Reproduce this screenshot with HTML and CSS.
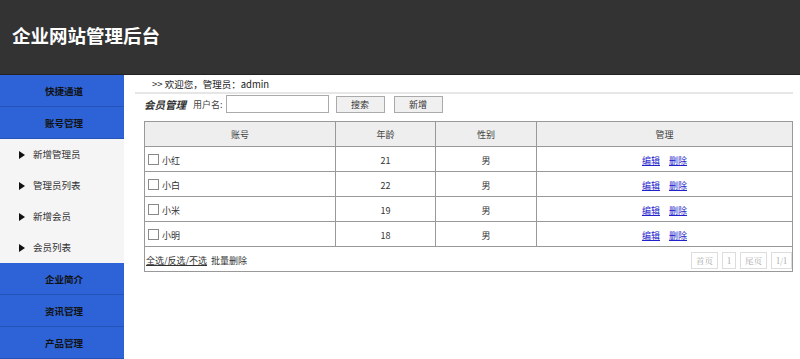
FILE: index.html
```html
<!DOCTYPE html>
<html lang="zh-CN">
  <head>
    <meta charset="UTF-8" />
    <title>企业网站管理后台</title>
    <link rel="stylesheet" href="styles.css">
  </head>
  <body>
    <!-- 顶部 -->
    <header class="top">
      <h1>企业网站管理后台</h1>
    </header>

    <div class="wrap">
      <!-- 左侧菜单 -->
      <aside class="side">
        <div class="menu-title">快捷通道</div>
        <div class="menu-title">账号管理</div>
        <ul class="sub-menu">
          <li>新增管理员</li>
          <li>管理员列表</li>
          <li>新增会员</li>
          <li>会员列表</li>
        </ul>
        <div class="menu-title">企业简介</div>
        <div class="menu-title">资讯管理</div>
        <div class="menu-title">产品管理</div>
      </aside>

      <!-- 内容区 -->
      <main class="main">
        <div class="welcome">&gt;&gt; 欢迎您，管理员：admin</div>

        <div class="toolbar">
          <span class="page-name">会员管理</span>
          <label>用户名:</label>
          <input type="text" class="search-input" />
          <button class="btn">搜索</button>
          <button class="btn">新增</button>
        </div>

        <table class="list">
          <thead>
            <tr>
              <th class="c-name">账号</th>
              <th class="c-age">年龄</th>
              <th class="c-sex">性别</th>
              <th>管理</th>
            </tr>
          </thead>
          <tbody>
            <tr>
              <td class="left"><span class="chk"></span>小红</td>
              <td>21</td>
              <td>男</td>
              <td><a href="#">编辑</a><a href="#">删除</a></td>
            </tr>
            <tr>
              <td class="left"><span class="chk"></span>小白</td>
              <td>22</td>
              <td>男</td>
              <td><a href="#">编辑</a><a href="#">删除</a></td>
            </tr>
            <tr>
              <td class="left"><span class="chk"></span>小米</td>
              <td>19</td>
              <td>男</td>
              <td><a href="#">编辑</a><a href="#">删除</a></td>
            </tr>
            <tr>
              <td class="left"><span class="chk"></span>小明</td>
              <td>18</td>
              <td>男</td>
              <td><a href="#">编辑</a><a href="#">删除</a></td>
            </tr>
          </tbody>
          <tfoot>
            <tr>
              <td colspan="4">
                <div class="foot">
                  <span class="batch"><u>全选/反选/不选</u>&nbsp;&nbsp;批量删除</span>
                  <span class="pager">
                    <span class="pg">首页</span>
                    <span class="pg">1</span>
                    <span class="pg">尾页</span>
                    <span class="pg">1/1</span>
                  </span>
                </div>
              </td>
            </tr>
          </tfoot>
        </table>
      </main>
    </div>
  </body>
</html>
```

FILE: styles.css
```css
* {
  margin: 0;
  padding: 0;
  box-sizing: border-box;
}

body {
  font-family: "Noto Sans CJK SC", "Liberation Sans", sans-serif;
  font-size: 9px;
  color: #333;
  background: #fff;
  height: 359px;
  overflow: hidden;
}

/* 顶部 */
.top {
  height: 75px;
  background: #333;
  border-bottom: 1px solid #222;
  display: flex;
  align-items: center;
  padding: 0 0 5px 12px;
}

.top h1 {
  color: #fff;
  font-size: 18.5px;
  font-weight: bold;
}

.wrap {
  display: flex;
}

/* 左侧菜单 */
.side {
  width: 124px;
  flex-shrink: 0;
}

.menu-title {
  height: 32px;
  line-height: 32px;
  background: #2d63d6;
  border-bottom: 1px solid #2553b8;
  text-align: center;
  font-weight: bold;
  font-size: 9.5px;
  color: #111;
  padding-left: 4px;
}

.sub-menu {
  list-style: none;
  background: #f5f5f5;
}

.sub-menu li {
  height: 31px;
  line-height: 31px;
  padding-left: 33px;
  position: relative;
  font-size: 9.5px;
  color: #333;
}

.sub-menu li::before {
  content: "";
  position: absolute;
  left: 19px;
  top: 12px;
  border-left: 6px solid #111;
  border-top: 4px solid transparent;
  border-bottom: 4px solid transparent;
}

/* 内容区 */
.main {
  flex: 1;
  padding: 0 7px 0 11px;
}

.welcome {
  height: 19px;
  line-height: 18px;
  padding-left: 17px;
  border-bottom: 2px solid #e6e6e6;
  color: #222;
  font-size: 9.5px;
}

.toolbar {
  display: flex;
  align-items: center;
  height: 20px;
  padding-left: 9px;
}

.page-name {
  font-weight: bold;
  font-style: italic;
  font-size: 10.5px;
  color: #333;
  margin-right: 7px;
}

.toolbar label {
  color: #444;
  margin-right: 3px;
}

.search-input {
  width: 103px;
  height: 18px;
  border: 1px solid #aaa;
  margin-right: 7px;
}

.btn {
  width: 49px;
  height: 17px;
  border: 1px solid #aaa;
  background: #f0f0f0;
  font: inherit;
  color: #333;
  margin-right: 9px;
}

/* 列表 */
.list {
  margin: 7px 0 0 9px;
  width: 649px;
  border-collapse: collapse;
  border: 1px solid #999;
  text-align: center;
}

.list th {
  height: 25px;
  background: #eee;
  font-weight: normal;
  border: 1px solid #999;
  color: #444;
}

.list td {
  height: 25px;
  border: 1px solid #999;
  color: #333;
  padding-top: 2px;
}

.c-name {
  width: 191px;
}

.c-age {
  width: 100px;
}

.c-sex {
  width: 101px;
}

.list td.left {
  text-align: left;
  padding-left: 3px;
}

.chk {
  display: inline-block;
  width: 11px;
  height: 11px;
  border: 1px solid #888;
  vertical-align: -1px;
  margin-right: 3px;
}

.list a {
  color: #2222cc;
  text-decoration: underline;
  margin: 0 4.5px;
}

.list tfoot td {
  border-left: 1px solid #999;
  border-right: 1px solid #999;
  padding-top: 0;
}

.foot {
  display: flex;
  justify-content: space-between;
  align-items: center;
  padding: 3px 0 0 1px;
}

.batch {
  color: #333;
  font-size: 9px;
}

.pager {
  display: flex;
  gap: 4px;
}

.pg {
  border: 1px solid #ddd;
  color: #aaa;
  font-family: "Noto Serif CJK SC", "Liberation Serif", serif;
  font-size: 8.5px;
  padding: 1px 4px;
  line-height: 13px;
}
```
